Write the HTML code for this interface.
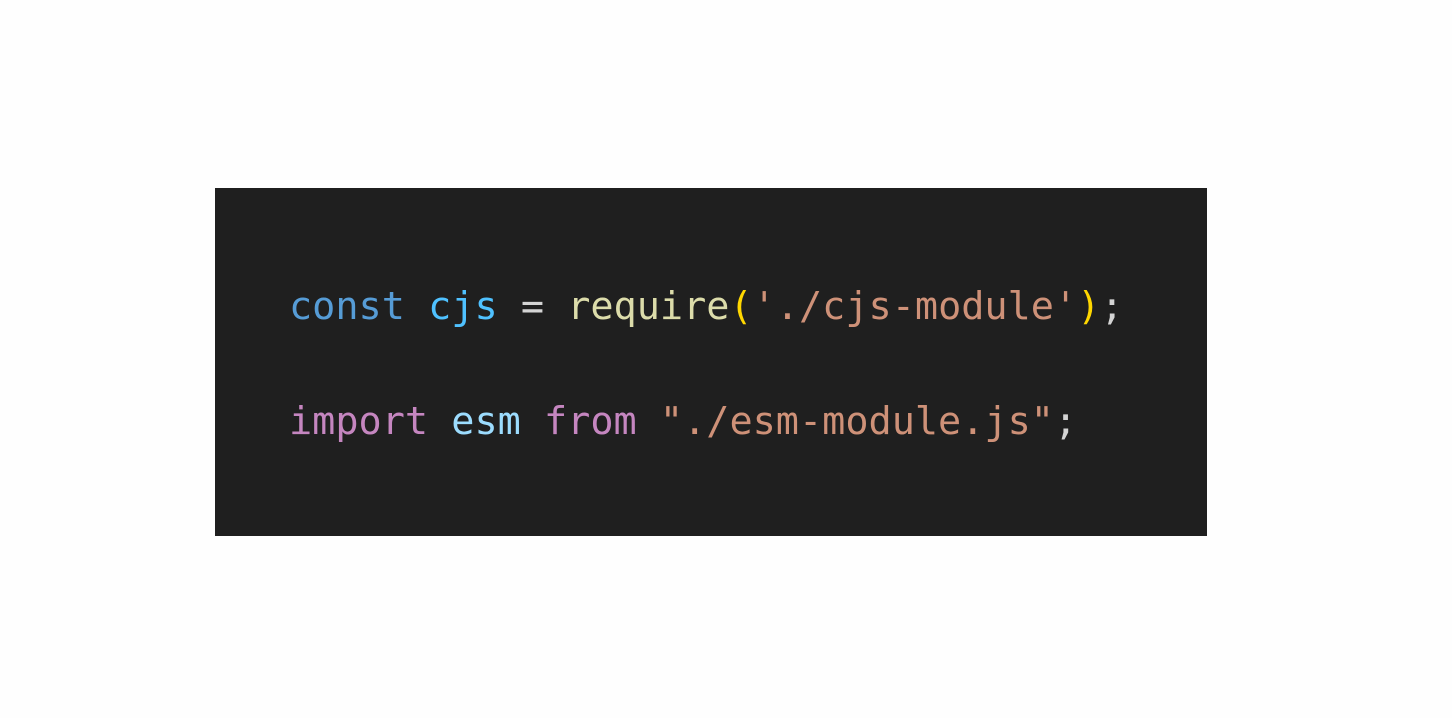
<!DOCTYPE html>
<html><head><style>
html,body{margin:0;padding:0;background:#fefefe;width:1452px;height:718px;overflow:hidden}
.box{position:absolute;left:215px;top:188px;width:992px;height:348px;background:#1f1f1f}
.l{position:absolute;left:289px;font-family:"DejaVu Sans Mono","Liberation Mono",monospace;font-size:38.5px;line-height:46px;white-space:pre;color:#d4d4d4}
.k{color:#569cd6}.v{color:#4fc1ff}.f{color:#dcdcaa}.p{color:#ffd700}.s{color:#ce9178}.i{color:#c586c0}.e{color:#9cdcfe}
</style></head><body>
<div class="box"></div>
<div class="l" style="top:284px"><span class="k">const</span> <span class="v">cjs</span> = <span class="f">require</span><span class="p">(</span><span class="s">'./cjs-module'</span><span class="p">)</span>;</div>
<div class="l" style="top:399px"><span class="i">import</span> <span class="e">esm</span> <span class="i">from</span> <span class="s">"./esm-module.js"</span>;</div>
</body></html>
